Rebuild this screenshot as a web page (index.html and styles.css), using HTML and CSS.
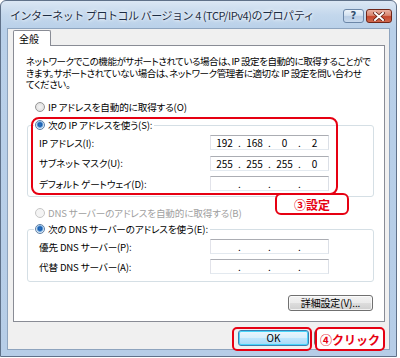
FILE: index.html
```html
<!DOCTYPE html>
<html lang="ja">
<head>
<meta charset="utf-8">
<title>IPv4 プロパティ</title>
<link rel="stylesheet" href="styles.css">
</head>
<body>
<div class="window">
  <div class="titlebar">
    <span class="title">インターネット プロトコル バージョン 4 (TCP/IPv4)のプロパティ</span>
    <div class="caption-btns">
      <span class="cap help">?</span>
      <span class="cap close"><svg width="12" height="9" viewBox="0 0 12 9"><path d="M2 1 L10 8 M10 1 L2 8" stroke="#5a1a10" stroke-width="3.4" stroke-linecap="square"/><path d="M2 1 L10 8 M10 1 L2 8" stroke="#ffffff" stroke-width="2" stroke-linecap="square"/></svg></span>
    </div>
  </div>
  <div class="client">
    <div class="tabs"><span class="tab">全般</span></div>
    <div class="panel">
      <p class="intro">
        <span>ネットワークでこの機能がサポートされている場合は、IP 設定を自動的に取得することがで</span>
        <span>きます。サポートされていない場合は、ネットワーク管理者に適切な IP 設定を問い合わせ</span>
        <span>てください。</span>
      </p>
      <div class="opt first"><span class="radio"></span><span>IP アドレスを自動的に取得する(O)</span></div>
      <fieldset class="group g1">
        <legend><span class="opt"><span class="radio on"></span><span>次の IP アドレスを使う(S):</span></span></legend>
        <div class="rows">
          <span class="lbl">IP アドレス(I):</span>
          <span class="ip"><span class="seg">192</span><span class="dot">.</span><span class="seg">168</span><span class="dot">.</span><span class="seg">0</span><span class="dot">.</span><span class="seg">2</span></span>
          <span class="lbl">サブネット マスク(U):</span>
          <span class="ip"><span class="seg">255</span><span class="dot">.</span><span class="seg">255</span><span class="dot">.</span><span class="seg">255</span><span class="dot">.</span><span class="seg">0</span></span>
          <span class="lbl">デフォルト ゲートウェイ(D):</span>
          <span class="ip"><span class="seg"></span><span class="dot">.</span><span class="seg"></span><span class="dot">.</span><span class="seg"></span><span class="dot">.</span><span class="seg"></span></span>
        </div>
      </fieldset>
      <div class="opt disabled"><span class="radio"></span><span>DNS サーバーのアドレスを自動的に取得する(B)</span></div>
      <fieldset class="group g2">
        <legend><span class="opt"><span class="radio on"></span><span>次の DNS サーバーのアドレスを使う(E):</span></span></legend>
        <div class="rows">
          <span class="lbl">優先 DNS サーバー(P):</span>
          <span class="ip"><span class="seg"></span><span class="dot">.</span><span class="seg"></span><span class="dot">.</span><span class="seg"></span><span class="dot">.</span><span class="seg"></span></span>
          <span class="lbl">代替 DNS サーバー(A):</span>
          <span class="ip"><span class="seg"></span><span class="dot">.</span><span class="seg"></span><span class="dot">.</span><span class="seg"></span><span class="dot">.</span><span class="seg"></span></span>
        </div>
      </fieldset>
      <div class="adv-row"><span class="btn adv">詳細設定(V)...</span></div>
    </div>
    <div class="actions">
      <span class="btn ok">OK</span>
      <span class="btn cancel"></span>
    </div>
  </div>
  <div class="mark mark-set"></div>
  <div class="tag tag-set">③設定</div>
  <div class="mark mark-ok"></div>
  <div class="tag tag-click">④クリック</div>
</div>
</body>
</html>
```

FILE: styles.css
```css
html, body {
  margin: 0;
  background: #ffffff;
  font-family: "Noto Sans CJK JP", "Noto Sans", sans-serif;
}

.window {
  position: relative;
  width: 397px;
  height: 357px;
  box-sizing: border-box;
  border: 1px solid #5f7189;
  border-radius: 6px 6px 0 0;
  background: linear-gradient(180deg, #dbe7f4 0px, #c3d7ec 14px, #b9d0e9 28px, #b6cde7 100%);
  padding: 0 6px 6px 6px;
  display: flex;
  flex-direction: column;
}

.titlebar {
  height: 27px;
  display: flex;
  align-items: center;
  padding-left: 3px;
}

.title {
  font-size: 11px;
  letter-spacing: -0.45px;
  color: #1c2c42;
  white-space: nowrap;
  text-shadow: 0 0 3px #ffffff, 0 0 5px #ffffff;
}

.caption-btns {
  margin-left: auto;
  align-self: flex-start;
  margin-top: 8px;
  margin-right: -2px;
  display: flex;
  gap: 2px;
}

.cap {
  height: 14px;
  box-sizing: border-box;
  border-radius: 3px;
  display: flex;
  align-items: center;
  justify-content: center;
}

.help {
  width: 21px;
  border: 1px solid #6c87a8;
  background: linear-gradient(180deg, #eef4fa 0%, #d3e1f0 45%, #b9cde4 55%, #c9daee 100%);
  color: #33506f;
  font-family: "DejaVu Sans", sans-serif;
  font-weight: bold;
  font-size: 10px;
  line-height: 12px;
}

.close {
  width: 26px;
  border: 1px solid #6e2619;
  background: linear-gradient(180deg, #eab2a3 0%, #d98670 45%, #c5462c 55%, #d06a4f 100%);
}

.client {
  flex: 1;
  background: #f0f0f0;
  border: 1px solid #8ea4be;
  padding: 1px 4px 3px 5px;
  display: flex;
  flex-direction: column;
}

.tabs {
  position: relative;
  z-index: 1;
  display: flex;
  height: 16px;
  margin-bottom: -1px;
}

.tab {
  width: 38px;
  box-sizing: border-box;
  border: 1px solid #898c95;
  border-bottom: none;
  border-radius: 2px 2px 0 0;
  background: #ffffff;
  font-size: 10px;
  line-height: 15px;
  padding-left: 5px;
  color: #000;
}

.panel {
  width: 372px;
  height: 277px;
  box-sizing: border-box;
  border: 1px solid #898c95;
  background: #ffffff;
  padding: 10px 10px 0 12px;
  font-size: 9.6px;
  letter-spacing: -0.15px;
  color: #000;
  font-feature-settings: "palt";
}

.intro {
  margin: 0;
  display: flex;
  flex-direction: column;
  line-height: 11.5px;
  white-space: nowrap;
  font-size: 9.5px;
  letter-spacing: -0.45px;
}

.opt {
  display: flex;
  align-items: center;
  gap: 3px;
  height: 12px;
  line-height: 12px;
  white-space: nowrap;
}

.opt.first {
  margin: 10.5px 0 0 9px;
}

.opt.disabled {
  margin: 10px 0 0 9px;
  color: #a0a0a0;
}

.radio {
  width: 10px;
  height: 10px;
  box-sizing: border-box;
  border-radius: 50%;
  border: 1px solid #949494;
  background: radial-gradient(circle at 50% 50%, #f4f4f4 0, #e2e2e2 70%, #fafafa 100%);
  flex: none;
}

.radio.on {
  border-color: #5d7fa6;
  background: radial-gradient(circle at 50% 45%, #2b74c6 0, #1c5fae 1.8px, #79b0e4 3px, #d8e4f0 3.6px, #f8f8f8 100%);
}

.opt.disabled .radio {
  border-color: #c6c6c6;
  background: #f4f4f4;
}

.group {
  width: 347px;
  box-sizing: border-box;
  margin: 6px 0 0 1px;
  border: 1px solid #d5dfe5;
  border-radius: 3px;
  padding: 4px 0 5px 11px;
  min-inline-size: 0;
}

.group.g2 {
  margin-top: 4px;
  padding-bottom: 7px;
}

.group legend {
  margin-left: -5px;
  padding: 0 2px 0 1px;
  height: 12px;
}

.rows {
  display: grid;
  grid-template-columns: 171px 119px;
  row-gap: 5.5px;
  align-items: center;
}

.g2 .rows {
  row-gap: 5px;
}

.lbl {
  white-space: nowrap;
  line-height: 12px;
}

.ip {
  display: flex;
  height: 15px;
  box-sizing: border-box;
  border: 1px solid;
  border-color: #abadb3 #dbdfe6 #e3e9ef #e2e3ea;
  background: #ffffff;
  line-height: 13px;
  font-size: 10px;
  letter-spacing: 0;
  font-feature-settings: normal;
}

.seg {
  width: 27px;
  text-align: center;
}

.dot {
  width: 3px;
  text-align: center;
}

.adv-row {
  width: 347px;
  margin: 13px 0 0 1px;
  display: flex;
  justify-content: flex-end;
}

.btn {
  height: 16px;
  box-sizing: border-box;
  border: 1px solid #707070;
  border-radius: 3px;
  background: linear-gradient(180deg, #f2f2f2 0%, #ebebeb 48%, #dddddd 52%, #cfcfcf 100%);
  font-size: 10px;
  line-height: 14px;
  text-align: center;
  color: #000;
  white-space: nowrap;
  box-shadow: inset 0 0 0 1px rgba(255,255,255,0.7);
}

.adv {
  width: 85px;
  margin-right: 1px;
}

.actions {
  margin-top: 8px;
  display: flex;
  justify-content: flex-end;
  gap: 5px;
}

.actions .btn {
  width: 71px;
}

.actions .ok {
  border-color: #3c7fb1;
  background: linear-gradient(180deg, #eaf6fd 0%, #d9f0fc 48%, #bee6fd 52%, #a7d9f5 100%);
  box-shadow: inset 0 0 0 1px #48d6fa;
}

.mark {
  position: absolute;
  box-sizing: border-box;
  border: 2px solid #e60012;
  border-radius: 8px;
}

.mark-set {
  left: 30px;
  top: 116px;
  width: 307px;
  height: 78px;
}

.mark-ok {
  left: 231px;
  top: 326px;
  width: 80px;
  height: 24px;
  border-radius: 5px;
}

.tag {
  position: absolute;
  box-sizing: border-box;
  border: 2px solid #e60012;
  border-radius: 6px;
  background: #ffffff;
  color: #e60012;
  font-weight: bold;
  font-size: 12px;
  display: flex;
  align-items: center;
  justify-content: center;
  white-space: nowrap;
}

.tag-set {
  left: 274px;
  top: 192px;
  width: 74px;
  height: 22px;
}

.tag-click {
  left: 314px;
  top: 326px;
  width: 70px;
  height: 24px;
  border-radius: 5px;
}
```
